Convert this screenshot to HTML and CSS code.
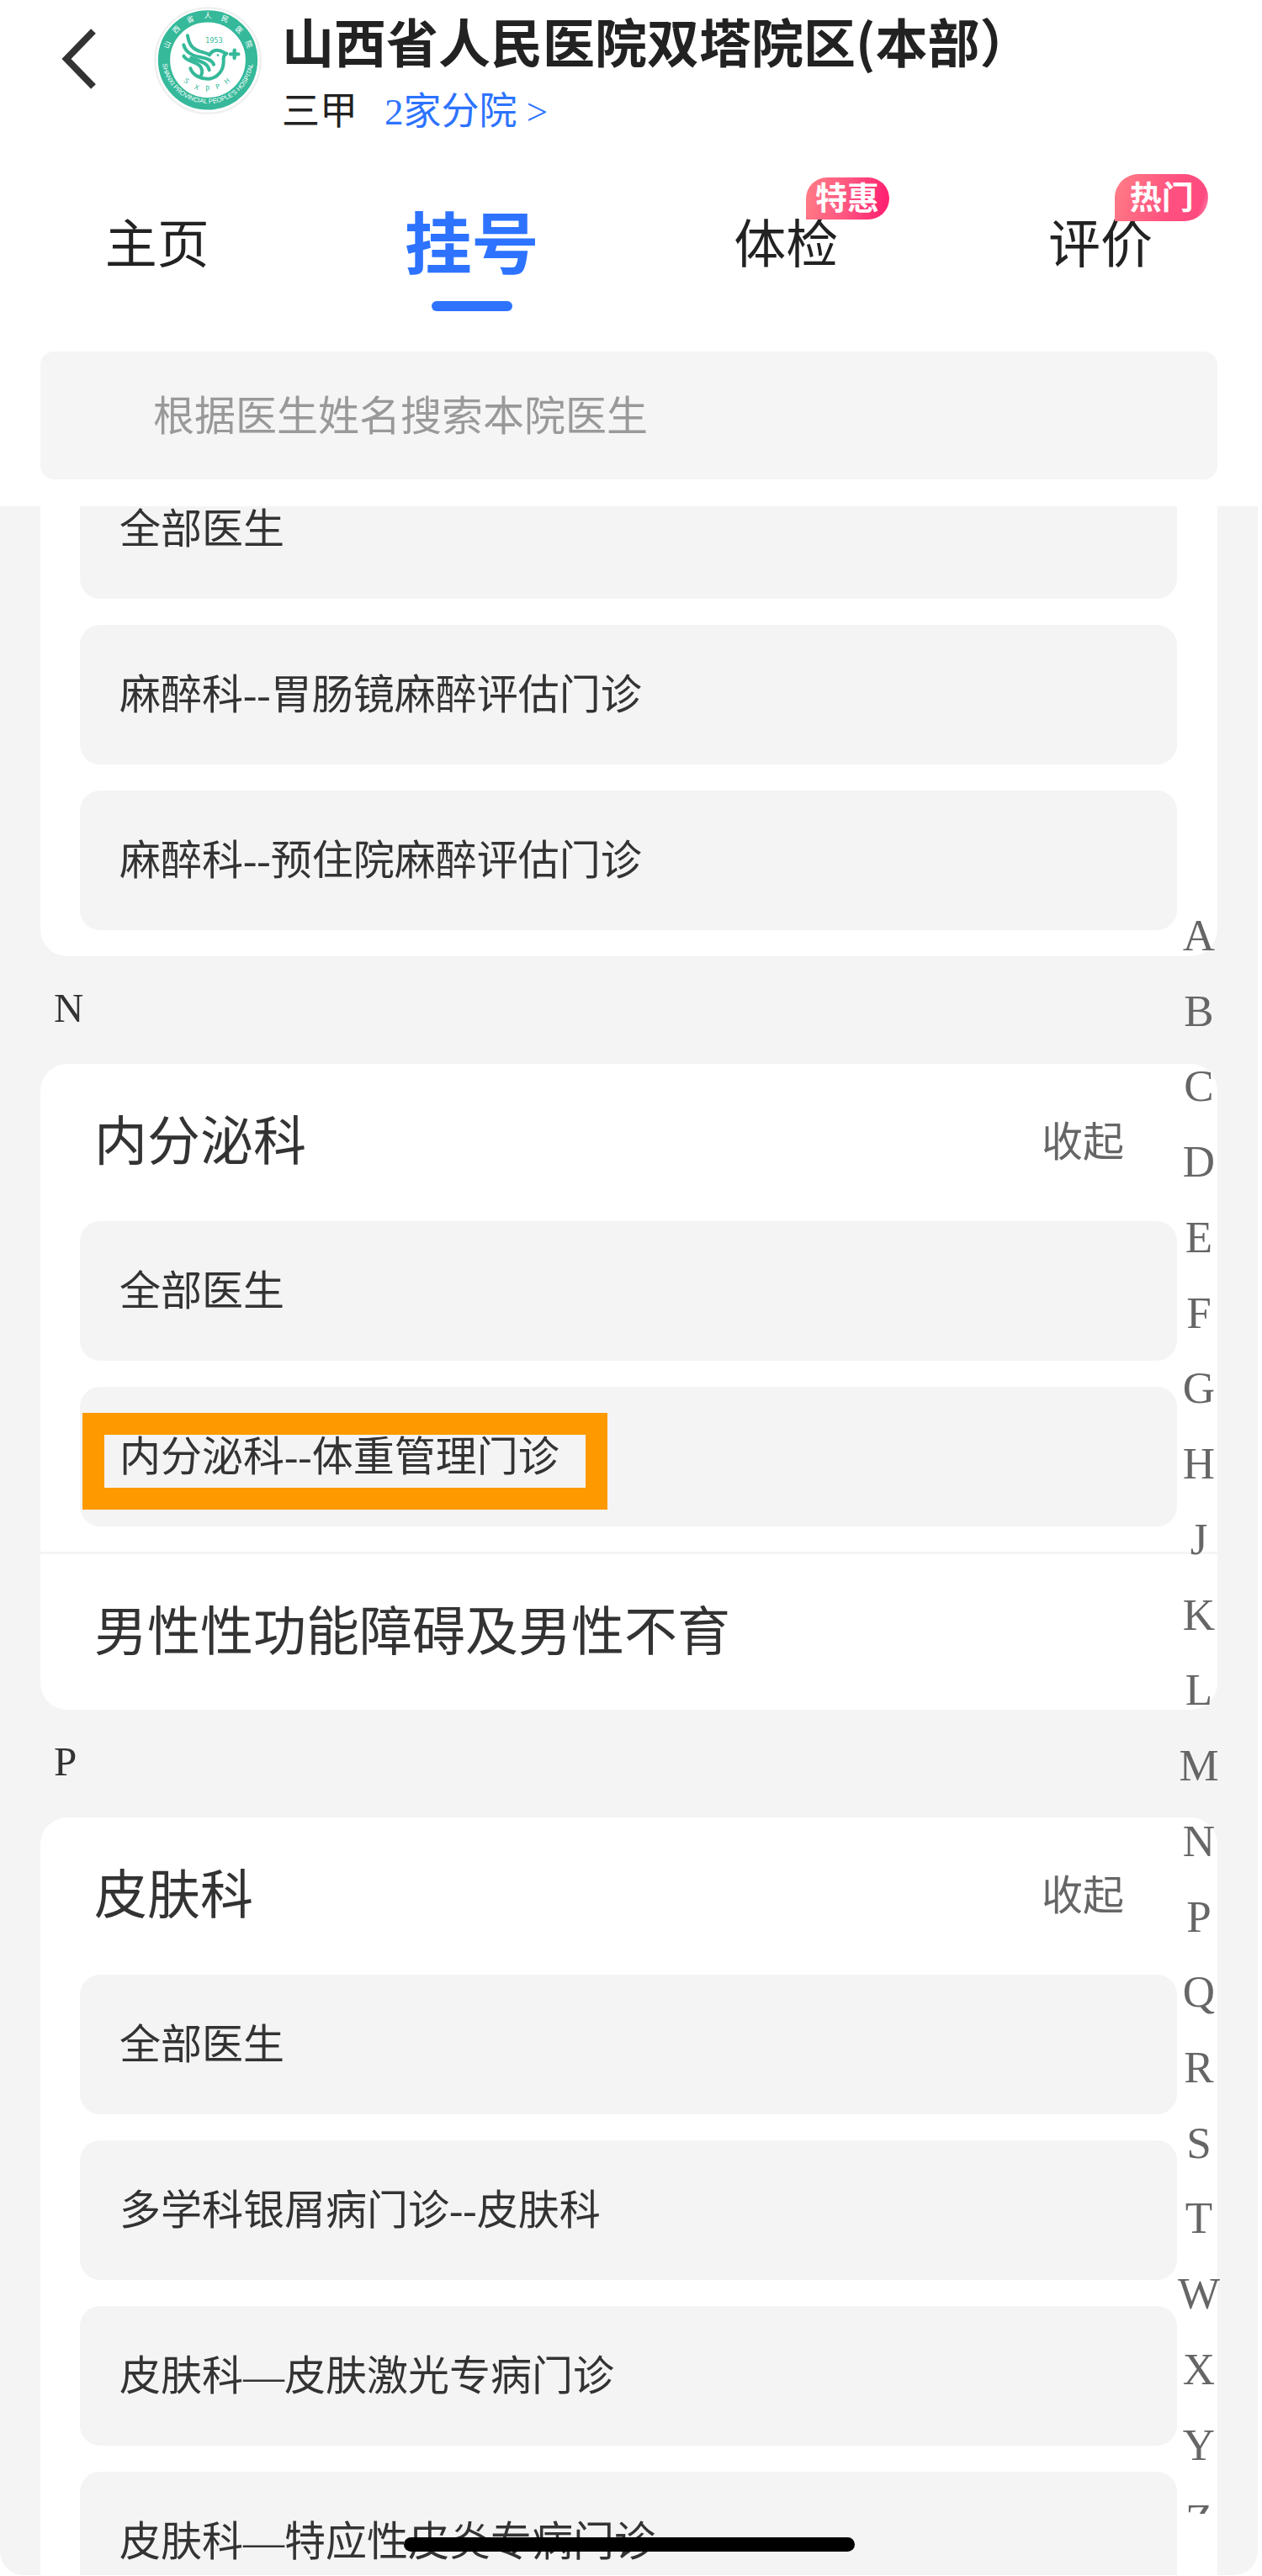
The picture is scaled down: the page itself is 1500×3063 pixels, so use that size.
FILE: index.html
```
<!DOCTYPE html>
<html lang="zh-CN">
<head>
    <meta charset="UTF-8">
    <meta name="viewport" content="width=device-width, initial-scale=1.0">
    <title>山西省人民医院双塔院区 - 挂号</title>
    <link rel="stylesheet" href="styles.css">
</head>
<body>

    <div class="screen">
        <header class="header">
            <div class="hospital">
                <button class="back" type="button" aria-label="返回">
                    <svg width="44" height="76" viewBox="0 0 44 76" fill="none" stroke="#333" stroke-width="8">
                        <path d="M39 5 L7 38 L39 71"/>
                    </svg>
                </button>
                <svg class="logo" viewBox="40 24 384 384">
                    <circle cx="232" cy="216" r="188" fill="#fff" stroke="#efefef" stroke-width="7"/>
                    <circle cx="232" cy="214" r="156" fill="none" stroke="#35b99a" stroke-width="43"/>
                    <!-- name ring -->
                    <g class="ring-cn">
                        <text transform="translate(88 160) rotate(-68)" dy="8">山</text>
                        <text transform="translate(120 106) rotate(-45)" dy="8">西</text>
                        <text transform="translate(170 70) rotate(-22)" dy="8">省</text>
                        <text transform="translate(232 57)" dy="8">人</text>
                        <text transform="translate(293 69) rotate(22)" dy="8">民</text>
                        <text transform="translate(343 108) rotate(45)" dy="8">医</text>
                        <text transform="translate(377 158) rotate(68)" dy="8">院</text>
                    </g>
                    <path id="ring" d="M69 206 A163 163 0 0 0 395 206" fill="none"/>
                    <text class="ring-en"><textPath href="#ring" startOffset="50%">SHANXI PROVINCIAL PEOPLE'S HOSPITAL</textPath></text>
                    <!-- dove -->
                    <g fill="none" stroke="#35b99a" stroke-width="12" stroke-linecap="round" stroke-linejoin="round">
                        <path d="M160 127 C166 166 184 178 206 184 C220 188 232 190 238 196 C246 182 258 177 271 180 C284 182 290 190 299 191 C288 196 287 204 288 214 C290 250 268 277 238 281 C208 284 178 268 170 244"/>
                        <path d="M146 160 C152 186 172 196 196 202 C224 208 246 212 253 230"/>
                        <path d="M172 207 C204 218 232 224 237 250"/>
                        <path d="M146 200 C158 222 190 218 206 238 C217 254 210 266 205 276"/>
                    </g>
                    <circle cx="268" cy="197" r="4" fill="#35b99a"/>
                    <path d="M327 179 V207 M313 193 H341" stroke="#35b99a" stroke-width="13" stroke-linecap="round"/>
                    <text class="mark" x="254" y="152">1953</text>
                    <g class="mark">
                        <text transform="translate(155 290) rotate(40)" dy="7">S</text>
                        <text transform="translate(192 313) rotate(20)" dy="7">X</text>
                        <text transform="translate(231 319)" dy="7">P</text>
                        <text transform="translate(268 310) rotate(-20)" dy="7">P</text>
                        <text transform="translate(301 290) rotate(-40)" dy="7">H</text>
                    </g>
                </svg>
                <div class="hospital-info">
                    <h1>山西省人民医院双塔院区(本部）</h1>
                    <p><span>三甲</span><a href="#">2家分院 &gt;</a></p>
                </div>
            </div>

            <nav class="tabs">
                <a href="#">主页</a>
                <a href="#" class="active">挂号</a>
                <a href="#">体检<span class="badge sale">特惠</span></a>
                <a href="#">评价<span class="badge hot">热门</span></a>
            </nav>

            <input class="search" type="text" aria-label="搜索医生" placeholder="根据医生姓名搜索本院医生">
        </header>

        <main class="list">
            <section class="card first">
                <a class="item" href="#">全部医生</a>
                <a class="item" href="#">麻醉科--胃肠镜麻醉评估门诊</a>
                <a class="item" href="#">麻醉科--预住院麻醉评估门诊</a>
            </section>

            <h2 class="letter">N</h2>
            <section class="card">
                <div class="dept">
                    <h3>内分泌科</h3>
                    <button class="toggle" type="button">收起</button>
                </div>
                <a class="item" href="#">全部医生</a>
                <a class="item marked" href="#">内分泌科--体重管理门诊</a>
                <div class="dept line">
                    <h3>男性性功能障碍及男性不育</h3>
                </div>
            </section>

            <h2 class="letter">P</h2>
            <section class="card">
                <div class="dept">
                    <h3>皮肤科</h3>
                    <button class="toggle" type="button">收起</button>
                </div>
                <a class="item" href="#">全部医生</a>
                <a class="item" href="#">多学科银屑病门诊--皮肤科</a>
                <a class="item" href="#">皮肤科—皮肤激光专病门诊</a>
                <a class="item" href="#">皮肤科—特应性皮炎专病门诊</a>
            </section>
        </main>

        <nav class="index">
            <div class="index-inner">
                <a href="#">A</a>
                <a href="#">B</a>
                <a href="#">C</a>
                <a href="#">D</a>
                <a href="#">E</a>
                <a href="#">F</a>
                <a href="#">G</a>
                <a href="#">H</a>
                <a href="#">J</a>
                <a href="#">K</a>
                <a href="#">L</a>
                <a href="#">M</a>
                <a href="#">N</a>
                <a href="#">P</a>
                <a href="#">Q</a>
                <a href="#">R</a>
                <a href="#">S</a>
                <a href="#">T</a>
                <a href="#">W</a>
                <a href="#">X</a>
                <a href="#">Y</a>
                <a href="#">Z</a>
            </div>
        </nav>

        <div class="home-bar"></div>
    </div>

</body>
</html>
```

FILE: styles.css
```
* {
    box-sizing: border-box;
}
body {
    margin: 0;
    padding: 0 5px 1px 0;
    height: 100vh;
    background: #fff;
    color: #333;
    font-family: "Liberation Serif", "Noto Sans CJK SC", serif;
    font-size: 49px;
}
a {
    color: inherit;
    text-decoration: none;
}
h1, h2, h3, p {
    margin: 0;
    font-weight: normal;
}
button {
    padding: 0;
    border: none;
    background: none;
    font-family: inherit;
    cursor: pointer;
}
.screen {
    position: relative;
    display: flex;
    flex-direction: column;
    height: 100%;
    overflow: hidden;
    border-radius: 0 0 28px 28px;
    background: #f4f4f4;
}

/* header */
.header {
    flex: none;
    padding-bottom: 32px;
    background: #fff;
}
.hospital {
    display: flex;
    align-items: flex-start;
    height: 164px;
    padding-left: 72px;
}
.back {
    width: 44px;
    margin-top: 32px;
}
.back svg {
    display: block;
}
.logo {
    width: 128px;
    height: 128px;
    margin: 8px 24px 0 67px;
}
.ring-cn {
    fill: #fff;
    font-size: 26px;
    text-anchor: middle;
}
.ring-en {
    fill: #fff;
    font-family: "Liberation Sans", sans-serif;
    font-size: 23px;
    text-anchor: middle;
}
.mark {
    fill: #35b99a;
    font-family: "DejaVu Sans", sans-serif;
    font-size: 24px;
    text-anchor: middle;
}
.hospital-info {
    padding-top: 12px;
}
.hospital-info h1 {
    color: #222;
    font-family: "Noto Sans CJK SC", sans-serif;
    font-size: 62px;
    font-weight: bold;
    line-height: 72px;
    white-space: nowrap;
}
.hospital-info p {
    display: flex;
    gap: 32px;
    margin-top: 19px;
    color: #222;
    font-size: 45px;
    line-height: 60px;
}
.hospital-info a {
    color: #2d73ff;
}

/* tabs */
.tabs {
    display: grid;
    grid-template-columns: repeat(4, 1fr);
    margin-top: 44px;
}
.tabs a {
    position: relative;
    color: #222;
    font-size: 62px;
    line-height: 168px;
    height: 170px;
    text-align: center;
}
.tabs .active {
    color: #2d73ff;
    font-size: 80px;
    font-weight: bold;
}
.tabs .active::after {
    content: "";
    position: absolute;
    left: 50%;
    bottom: 8px;
    width: 96px;
    height: 12px;
    margin-left: -48px;
    border-radius: 6px;
    background: #2d73ff;
}
.tabs .badge {
    position: absolute;
    color: #fff;
    font-size: 38px;
    font-weight: bold;
}
.sale {
    top: 3px;
    left: 210px;
    width: 99px;
    height: 50px;
    line-height: 50px;
    border-radius: 25px 25px 25px 0;
    background: linear-gradient(100deg, #ff7d86, #ff5580 50%, #ff2472 90%);
}
.hot {
    top: -1px;
    left: 204px;
    width: 111px;
    height: 56px;
    line-height: 56px;
    border-radius: 28px 28px 28px 0;
    background: linear-gradient(110deg, #ff7f86, #ff5080 60%, #ff4a80 88%, #ff9fc4);
}

.search {
    display: block;
    width: calc(100% - 96px);
    height: 152px;
    margin: 40px 48px 0;
    padding: 2px 48px 0 134px;
    border: none;
    border-radius: 16px;
    background: #f5f5f5;
    color: #333;
    font-family: inherit;
    font-size: 49px;
}
.search::placeholder {
    color: #999;
    opacity: 1;
}

/* department list */
.list {
    flex: 1;
    min-height: 0;
    padding: 0 48px;
    overflow: hidden;
}
.card {
    padding-bottom: 31px;
    overflow: hidden;
    border-radius: 32px;
    background: #fff;
}
.card.first {
    margin-top: -56px;
}
.card:has(.line) {
    padding-bottom: 0;
}
.letter {
    height: 128px;
    padding-left: 16px;
    font-size: 49px;
    line-height: 124px;
}
.dept {
    display: flex;
    justify-content: space-between;
    height: 187px;
    padding: 0 64px;
    line-height: 187px;
}
.dept h3 {
    font-size: 63px;
}
.dept.line {
    margin-top: 30px;
    height: 188px;
    border-top: 3px solid #f5f5f5;
}
.toggle {
    margin-right: 47px;
    color: #666;
    font-size: 49px;
    line-height: inherit;
}
.item {
    position: relative;
    display: block;
    height: 166px;
    margin: 0 48px 0 47px;
    padding-left: 47px;
    border-radius: 24px;
    background: #f4f4f4;
    line-height: 168px;
    white-space: nowrap;
}
.item + .item {
    margin-top: 31px;
}
.marked::after {
    content: "";
    position: absolute;
    top: 31px;
    left: 3px;
    box-sizing: border-box;
    width: 624px;
    height: 115px;
    border: 26px solid #ff9900;
}

/* letter index on the right */
.index {
    position: absolute;
    top: 1067px;
    right: 22px;
    bottom: 73px;
    width: 96px;
    overflow: hidden;
}
.index-inner {
    display: flex;
    flex-direction: column;
    height: 1974px;
}
.index a {
    flex: 1;
    min-height: 0;
    color: #666;
    font-size: 53px;
    line-height: 90px;
    text-align: center;
}

.home-bar {
    position: absolute;
    left: 50%;
    bottom: 28px;
    width: 536px;
    height: 17px;
    margin-left: -268px;
    border-radius: 9px;
    background: #000;
}
```
